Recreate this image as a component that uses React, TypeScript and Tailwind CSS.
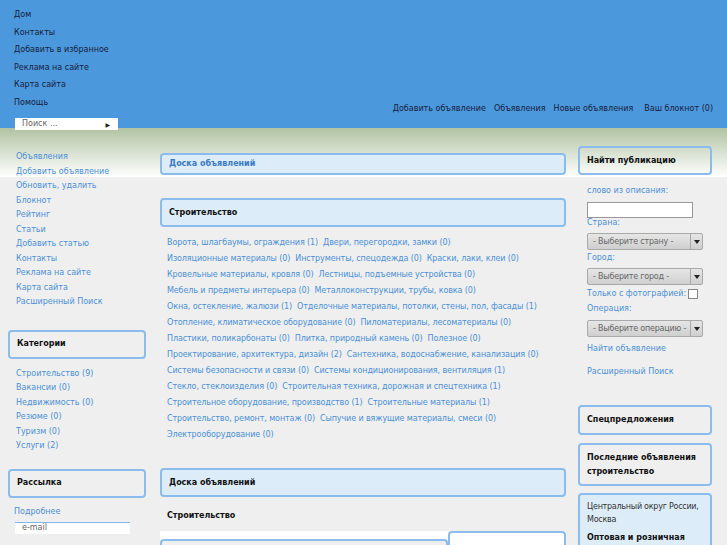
const topLinks = ["Дом", "Контакты", "Добавить в избранное", "Реклама на сайте", "Карта сайта", "Помощь"];
const topNav = ["Добавить объявление", "Объявления", "Новые объявления", "Ваш блокнот (0)"];
const sideLinks = [
  "Объявления",
  "Добавить объявление",
  "Обновить, удалить",
  "Блокнот",
  "Рейтинг",
  "Статьи",
  "Добавить статью",
  "Контакты",
  "Реклама на сайте",
  "Карта сайта",
  "Расширенный Поиск",
];
const categories = ["Строительство (9)", "Вакансии (0)", "Недвижимость (0)", "Резюме (0)", "Туризм (0)", "Услуги (2)"];
const rows = [
  ["Ворота, шлагбаумы, ограждения (1)", "Двери, перегородки, замки (0)"],
  ["Изоляционные материалы (0)", "Инструменты, спецодежда (0)", "Краски, лаки, клеи (0)"],
  ["Кровельные материалы, кровля (0)", "Лестницы, подъемные устройства (0)"],
  ["Мебель и предметы интерьера (0)", "Металлоконструкции, трубы, ковка (0)"],
  ["Окна, остекление, жалюзи (1)", "Отделочные материалы, потолки, стены, пол, фасады (1)"],
  ["Отопление, климатическое оборудование (0)", "Пиломатериалы, лесоматериалы (0)"],
  ["Пластики, поликарбонаты (0)", "Плитка, природный камень (0)", "Полезное (0)"],
  ["Проектирование, архитектура, дизайн (2)", "Сантехника, водоснабжение, канализация (0)"],
  ["Системы безопасности и связи (0)", "Системы кондиционирования, вентиляция (1)"],
  ["Стекло, стеклоизделия (0)", "Строительная техника, дорожная и спецтехника (1)"],
  ["Строительное оборудование, производство (1)", "Строительные материалы (1)"],
  ["Строительство, ремонт, монтаж (0)", "Сыпучие и вяжущие материалы, смеси (0)"],
  ["Электрооборудование (0)"],
];

function Box({ children, className = "" }: { children: React.ReactNode; className?: string }) {
  return <div className={`rounded-[4px] border-2 border-[#8bbcec] px-[7px] font-bold ${className}`}>{children}</div>;
}

function Select({ label }: { label: string }) {
  return (
    <div className="flex h-[17px] w-[116px] items-stretch rounded-[2px] border border-[#a9a9a9] bg-[linear-gradient(#e6e6e6,#cfcfcf)] text-[#666]">
      <div className="flex min-w-0 flex-1 items-center overflow-hidden whitespace-nowrap pl-[5px] text-[8px] tracking-[-0.2px]">{label}</div>
      <div className="flex w-[12px] shrink-0 items-center justify-center border-l border-[#a9a9a9]">
        <div className="h-0 w-0 border-x-[3px] border-t-[4px] border-x-transparent border-t-[#222]" />
      </div>
    </div>
  );
}

export default function App() {
  return (
    <div className="min-h-[545px] overflow-hidden bg-[#efefef] font-['DejaVu_Sans',sans-serif] text-[8px]">
      <header className="relative h-[128px] bg-[#4b98dd] text-[#17203a]">
        <div className="flex flex-col pl-[14px] pt-[8px]">
          {topLinks.map((l) => (
            <div key={l} className="h-[17.5px] leading-[14px]">{l}</div>
          ))}
        </div>
        <div className="absolute left-[15px] top-[118px] flex h-[12px] w-[103px] items-center justify-between bg-white pl-[7px] pr-[8px] text-[#666]">
          <span>Поиск ...</span>
          <span className="text-[6px] text-[#222]">▶</span>
        </div>
        <nav className="absolute right-[14px] top-[103px] flex gap-[8px]">
          {topNav.map((l, i) => (
            <span key={l} className={i === 3 ? "ml-[3px]" : ""}>{l}</span>
          ))}
        </nav>
      </header>

      <main className="flex bg-[linear-gradient(#b1c3a3,#ffffff_49px,#efefef_49px)] pl-[8px]">
        <aside className="w-[144px] shrink-0 pt-[22px]">
          <div className="flex flex-col pl-[8px] text-[#4a8fd8]">
            {sideLinks.map((l) => (
              <div key={l} className="h-[14.5px] leading-[14px]">{l}</div>
            ))}
          </div>
          <Box className="mt-[20px] flex h-[29px] w-[138px] items-center text-[#111]">Категории</Box>
          <div className="mt-[8px] flex flex-col pl-[8px] text-[#4a8fd8]">
            {categories.map((l) => (
              <div key={l} className="h-[14.5px] leading-[14px]">{l}</div>
            ))}
          </div>
          <Box className="mt-[15px] flex h-[29px] w-[138px] items-center text-[#111]">Рассылка</Box>
          <div className="mt-[8px] pl-[6px] text-[#4a8fd8]">Подробнее</div>
          <div className="ml-[7px] mt-[4px] flex h-[12px] w-[115px] items-center border-t border-[#7fb5ea] bg-white pl-[7px] text-[#666]">
            e-mail
          </div>
        </aside>

        <section className="ml-[8px] w-[406px] shrink-0 pt-[25px]">
          <Box className="flex h-[22px] items-center bg-[#dcecf9] text-[#3a7ac2]">Доска объявлений</Box>
          <Box className="mt-[23px] flex h-[29px] items-center bg-[#dcecf9] text-[#111]">Строительство</Box>
          <div className="mt-[9px] flex flex-col pl-[7px] tracking-[-0.1px] text-[#4a8fd8]">
            {rows.map((r, i) => (
              <div key={i} className="flex h-[16px] gap-[5px] leading-[14px]">
                {r.map((t) => (
                  <span key={t}>{t}</span>
                ))}
              </div>
            ))}
          </div>
          <Box className="mt-[24px] flex h-[29px] items-center bg-[#dcecf9] text-[#111]">Доска объявлений</Box>
          <div className="mt-[13px] pl-[7px] font-bold text-[#111]">Строительство</div>
          <div className="mt-[9px] flex h-[20px] items-end bg-white">
            <div className="h-[12px] flex-1 rounded-t-[4px] border-x-2 border-t-2 border-[#8bbcec] bg-[#efefef]" />
            <div className="h-[19px] w-[118px] self-start rounded-t-[4px] border-x-2 border-t-2 border-[#8bbcec] bg-white" />
          </div>
        </section>

        <aside className="ml-[12px] w-[134px] shrink-0 pt-[18px]">
          <Box className="flex h-[29px] items-center text-[#111]">Найти публикацию</Box>
          <div className="flex flex-col pl-[9px] text-[#4a8fd8]">
            <div className="mt-[10px] h-[12px] leading-[12px]">слово из описания:</div>
            <div className="mt-[5px] h-[16px] w-[106px] border border-[#999] bg-white" />
            <div className="mt-[-1px] h-[12px] leading-[12px]">Страна:</div>
            <div className="mt-[4px]"><Select label="- Выберите страну -" /></div>
            <div className="mt-[2px] h-[12px] leading-[12px]">Город:</div>
            <div className="mt-[4px]"><Select label="- Выберите город -" /></div>
            <div className="mt-[3px] flex h-[12px] items-center gap-[2px] leading-[12px]">
              Только с фотографией:
              <span className="inline-block h-[10px] w-[10px] border border-[#888] bg-white" />
            </div>
            <div className="mt-[3px] h-[12px] leading-[12px]">Операция:</div>
            <div className="mt-[5px]"><Select label="- Выберите операцию -" /></div>
            <div className="mt-[6px] h-[12px] leading-[12px]">Найти объявление</div>
            <div className="mt-[11px] h-[12px] leading-[12px]">Расширенный Поиск</div>
          </div>
          <Box className="mt-[27px] flex h-[30px] items-center text-[#111]">Спецпредложения</Box>
          <Box className="mt-[8px] flex h-[43px] flex-col justify-center leading-[14px] text-[#111]">
            <div>Последние объявления</div>
            <div>строительство</div>
          </Box>
          <Box className="mt-[7px] h-[60px] whitespace-nowrap bg-[#dcecf9] pt-[5px] font-normal leading-[13px] tracking-[-0.25px] text-[#333]">
            <div>Центральный округ России,</div>
            <div>Москва</div>
            <div className="mt-[5px] font-bold tracking-normal text-[#111]">Оптовая и розничная</div>
          </Box>
        </aside>
      </main>
    </div>
  );
}
